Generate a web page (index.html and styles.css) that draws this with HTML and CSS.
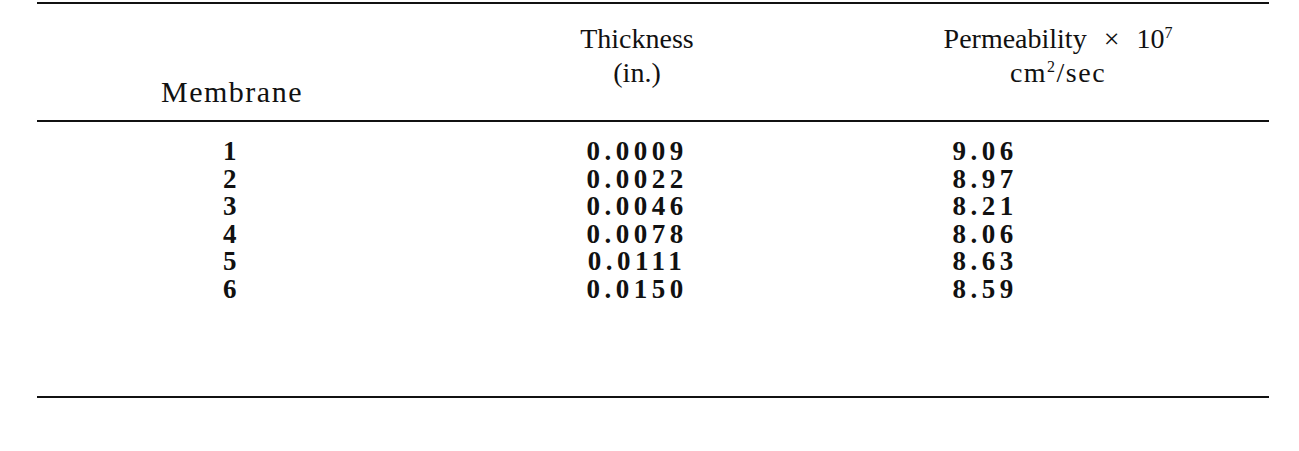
FILE: index.html
```html
<!DOCTYPE html>
<html lang="en">
<head>
  <meta charset="UTF-8">
  <title>Membrane permeability</title>
  <link rel="stylesheet" href="styles.css">
</head>
<body>
  <!-- Permeability table -->
  <table class="data-table">
    <thead>
      <tr>
        <th class="col-membrane">Membrane</th>
        <th class="col-thickness">Thickness<br>(in.)</th>
        <th class="col-perm">Permeability <span class="times">&times;</span> 10<sup>7</sup><br><span class="unit">cm<sup>2</sup>/sec</span></th>
      </tr>
    </thead>
    <tbody>
      <tr class="first"><td>1</td><td>0.0009</td><td class="perm">9.06</td></tr>
      <tr><td>2</td><td>0.0022</td><td class="perm">8.97</td></tr>
      <tr><td>3</td><td>0.0046</td><td class="perm">8.21</td></tr>
      <tr><td>4</td><td>0.0078</td><td class="perm">8.06</td></tr>
      <tr><td>5</td><td>0.0111</td><td class="perm">8.63</td></tr>
      <tr class="last"><td>6</td><td>0.0150</td><td class="perm">8.59</td></tr>
    </tbody>
  </table>
</body>
</html>
```

FILE: styles.css
```css
/* General reset */
body, html {
  margin: 0;
  padding: 0;
  background: #fff;
  color: #111;
  font-family: "Liberation Serif", "Times New Roman", serif;
}

/* Table */
.data-table {
  margin: 2px 0 0 37px;
  width: 1232px;
  border-collapse: collapse;
  border-top: 2px solid #111;
  border-bottom: 2px solid #111;
}

.data-table th {
  font-weight: normal;
  font-size: 28px;
  line-height: 34px;
  text-align: center;
  padding: 18px 0 30px;
  vertical-align: bottom;
  border-bottom: 2px solid #111;
}

.data-table th.col-membrane {
  width: 390px;
  padding-bottom: 11px;
  font-size: 30px;
  letter-spacing: 1.5px;
}

.data-table th.col-thickness {
  width: 420px;
}

.data-table sup {
  font-size: 16px;
  line-height: 0;
  vertical-align: 10px;
}

.times {
  margin: 0 10px;
}

.unit {
  letter-spacing: 1.5px;
}

.data-table td {
  font-weight: bold;
  font-size: 27px;
  line-height: 27.6px;
  text-align: center;
  letter-spacing: 4.5px;
  padding: 0;
}

.data-table td.perm {
  padding-right: 146px;
}

.data-table tr.first td {
  padding-top: 16px;
}

.data-table tr.last td {
  padding-bottom: 92px;
}
```
